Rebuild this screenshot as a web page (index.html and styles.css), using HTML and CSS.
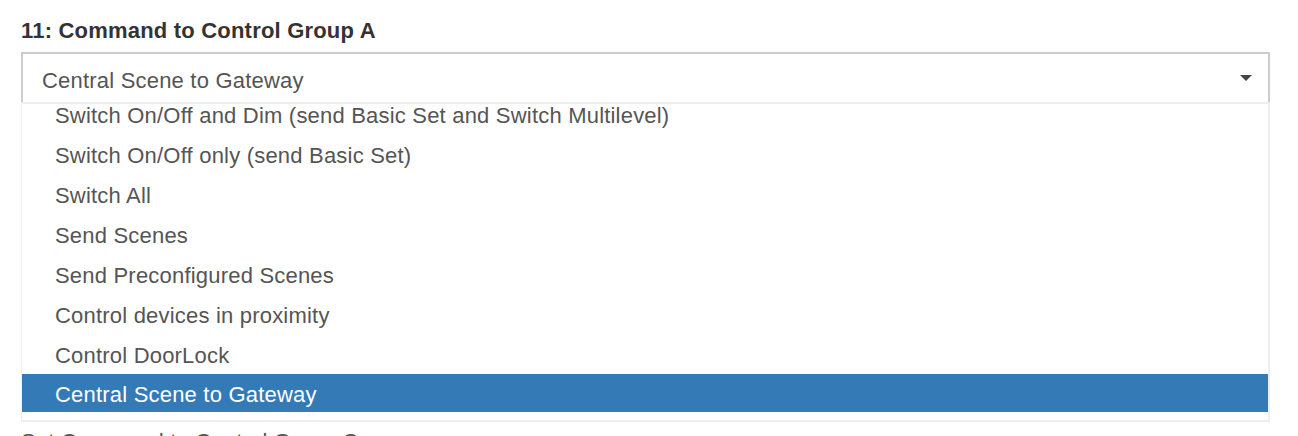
FILE: index.html
```html
<!DOCTYPE html>
<html>
<head>
<meta charset="utf-8">
<link rel="stylesheet" href="styles.css">
</head>
<body>
<div class="page">
  <div class="field">
    <label class="field-label">11: Command to Control Group A</label>
    <div class="select">
      <span class="select-value">Central Scene to Gateway</span>
      <span class="caret"></span>
    </div>
    <div class="dropdown">
      <ul class="options">
        <li class="option">Switch On/Off and Dim (send Basic Set and Switch Multilevel)</li>
        <li class="option">Switch On/Off only (send Basic Set)</li>
        <li class="option">Switch All</li>
        <li class="option">Send Scenes</li>
        <li class="option">Send Preconfigured Scenes</li>
        <li class="option">Control devices in proximity</li>
        <li class="option">Control DoorLock</li>
        <li class="option selected">Central Scene to Gateway</li>
      </ul>
    </div>
    <div class="next-text">Set Command to Control Group C</div>
  </div>
</div>
</body>
</html>
```

FILE: styles.css
```css
html, body {
  margin: 0;
  padding: 0;
  background: #fff;
}
.page {
  padding: 18px 28px 0 21px;
  font-family: "Liberation Sans", Arial, sans-serif;
  height: 436px;
  box-sizing: border-box;
  overflow: hidden;
}
.field {
  display: flex;
  flex-direction: column;
}
.field-label {
  font-weight: bold;
  font-size: 22px;
  letter-spacing: 0.2px;
  color: #333;
  line-height: 26px;
  margin-bottom: 8px;
}
.select {
  height: 50px;
  box-sizing: border-box;
  border: 2px solid #ccc;
  border-bottom: none;
  display: flex;
  align-items: center;
  justify-content: space-between;
  padding: 6px 16px 0 19px;
}
.select-value {
  font-size: 22px;
  letter-spacing: 0.2px;
  color: #555;
}
.caret {
  width: 0;
  height: 0;
  border-left: 6px solid transparent;
  border-right: 6px solid transparent;
  border-top: 6px solid #444;
  margin-top: -6px;
}
.dropdown {
  height: 320px;
  box-sizing: border-box;
  border: 2px solid #eee;
  border-left-width: 1px;
  overflow: hidden;
  padding: 0 0 8px 0;
  display: flex;
  flex-direction: column;
  justify-content: flex-end;
}
.options {
  list-style: none;
  margin: 0;
  padding: 0;
}
.option {
  height: 40px;
  box-sizing: border-box;
  padding-top: 4px;
  line-height: 36px;
  padding-left: 33px;
  font-size: 22px;
  letter-spacing: 0.2px;
  color: #555;
}
.option.selected {
  background: #337ab7;
  color: #fff;
  height: 38px;
  line-height: 34px;
}
.next-text {
  margin-top: 8px;
  font-size: 22px;
  letter-spacing: 0.2px;
  color: #555;
  line-height: 24px;
}
```
